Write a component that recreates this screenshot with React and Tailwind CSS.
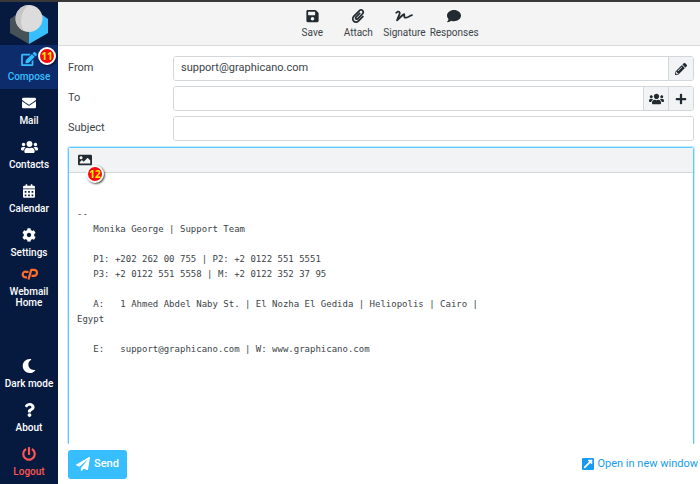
import {
  FaCalendarAlt,
  FaCog,
  FaComment,
  FaEdit,
  FaEnvelope,
  FaExternalLinkSquareAlt,
  FaImage,
  FaMoon,
  FaPaperclip,
  FaPaperPlane,
  FaPencilAlt,
  FaPlus,
  FaPowerOff,
  FaQuestion,
  FaSave,
  FaSignature,
  FaUsers,
} from 'react-icons/fa'

const mainLinks = [
  { label: 'Compose', icon: FaEdit, iconClass: 'w-4', className: 'bg-[#0c2c6c] text-[#37beff]', step: 11 },
  { label: 'Mail', icon: FaEnvelope, iconClass: 'w-[14px]', className: 'text-white' },
  { label: 'Contacts', icon: FaUsers, iconClass: 'w-[17px]', className: 'text-white' },
  { label: 'Calendar', icon: FaCalendarAlt, iconClass: 'w-3', className: 'text-white' },
  { label: 'Settings', icon: FaCog, iconClass: 'w-[14px]', className: 'text-white' },
  { label: 'Webmail Home', icon: CpanelMark, iconClass: 'w-[17px]', className: 'text-white' },
]

const bottomLinks = [
  { label: 'Dark mode', icon: FaMoon, iconClass: 'w-[14px]', className: 'text-white' },
  { label: 'About', icon: FaQuestion, iconClass: 'w-[11px]', className: 'text-white' },
  { label: 'Logout', icon: FaPowerOff, iconClass: 'w-[14px]', className: 'text-[#ff5552]' },
]

const tools = [
  { label: 'Save', icon: FaSave, iconClass: 'w-[13px]' },
  { label: 'Attach', icon: FaPaperclip, iconClass: 'w-[14px]' },
  { label: 'Signature', icon: FaSignature, iconClass: 'w-[18px]' },
  { label: 'Responses', icon: FaComment, iconClass: 'w-[14px]' },
]

const signature = `

--
   Monika George | Support Team

   P1: +202 262 00 755 | P2: +2 0122 551 5551
   P3: +2 0122 551 5558 | M: +2 0122 352 37 95

   A:   1 Ahmed Abdel Naby St. | El Nozha El Gedida | Heliopolis | Cairo |
Egypt

   E:   support@graphicano.com | W: www.graphicano.com`

function Logo() {
  return (
    <svg viewBox="0 0 40 40" className="h-10 w-10" aria-hidden="true">
      <path d="M1 15 L8 10 L20 20 V40 L1 29 Z" fill="#465158" />
      <path d="M39 15 L32 10 L20 20 V40 L39 29 Z" fill="#37beff" />
      <circle cx="20" cy="14.500" r="13.500" fill="#dcdcdc" />
      <path d="M20 1 A13.500 13.500 0 0 0 15 27 C10 20 11 7 20 1 Z" fill="#c6c6c6" />
    </svg>
  )
}

function CpanelMark({ className }) {
  return (
    <svg viewBox="0 0 34 24" className={className} fill="none" stroke="#ff6c2c" strokeWidth="4.500" aria-hidden="true">
      <path d="M15 7.500 H9.500 A5.500 5.500 0 0 0 8.500 18.500 H12" />
      <path d="M15 23 L20.500 3.500 H26 A5.800 5.800 0 0 1 26 15.500 H21" strokeLinejoin="round" />
    </svg>
  )
}

function Step({ number, className }) {
  return (
    <span
      className={`absolute flex h-[18px] w-[18px] items-center justify-center rounded-full border-2 border-white bg-[#fb0808] font-['Open_Sans',sans-serif] text-[10px] leading-none font-bold text-[#ffee00] shadow-[1px_1px_2px_rgba(0,0,0,0.7)] ${className}`}
    >
      {number}
    </span>
  )
}

function SideLink({ label, icon: Icon, iconClass, className, step }) {
  return (
    <a
      href="#"
      className={`relative flex min-h-[44px] flex-col items-center justify-center gap-[5px] px-1 py-0.5 text-center text-[10px] leading-[11px] font-medium ${className}`}
    >
      <Icon className={`h-[14px] ${iconClass}`} />
      <span>{label}</span>
      {step && <Step number={step} className="top-0.5 right-0.5" />}
    </a>
  )
}

function Field({ id, label, value, children }) {
  return (
    <div className="flex items-center">
      <label htmlFor={id} className="w-[105px] shrink-0 text-[11px]">
        {label}
      </label>
      <div className="flex h-[25px] min-w-0 flex-1 overflow-hidden rounded-[3px] border border-[#d3d7da]">
        <input id={id} type="text" defaultValue={value} className="min-w-0 flex-1 bg-white px-[7px] text-[11px] outline-none" />
        {children}
      </div>
    </div>
  )
}

function FieldButton({ label, icon: Icon, iconClass }) {
  return (
    <button
      type="button"
      aria-label={label}
      className="flex w-[25px] shrink-0 items-center justify-center border-l border-[#d3d7da] bg-[#f1f3f4] text-[#222b31]"
    >
      <Icon className={iconClass} />
    </button>
  )
}

export default function App() {
  return (
    <div className="flex min-h-screen flex-col bg-white font-['Roboto',sans-serif] text-[#3b4449]">
      <div className="h-0.5 bg-[#3b3839]" />
      <div className="flex flex-1">

        {/* Sidebar */}
        <nav className="flex w-[58px] shrink-0 flex-col bg-[#061a3f]">
          <div className="flex h-[43px] items-center justify-center">
            <Logo />
          </div>
          {mainLinks.map((link) => (
            <SideLink key={link.label} {...link} />
          ))}
          <div className="mt-auto">
            {bottomLinks.map((link) => (
              <SideLink key={link.label} {...link} />
            ))}
          </div>
        </nav>

        <main className="flex min-w-0 flex-1 flex-col">

          {/* Toolbar */}
          <header className="flex h-11 shrink-0 justify-center border-b border-[#d9dbdc] bg-[#f4f4f4] pt-px pl-3">
            {tools.map(({ label, icon: Icon, iconClass }) => (
              <button
                key={label}
                type="button"
                className="flex min-w-[46px] flex-col items-center justify-center gap-1 px-0.5 text-[10px] leading-3"
              >
                <Icon className={`h-[14px] text-[#222b31] ${iconClass}`} />
                {label}
              </button>
            ))}
          </header>

          <form className="flex flex-1 flex-col pt-[10px] pr-1.5 pl-[10px]">
            <div className="flex flex-col gap-[5px]">
              <Field id="from" label="From" value="support@graphicano.com">
                <FieldButton label="Edit identities" icon={FaPencilAlt} iconClass="h-3 w-3" />
              </Field>
              <Field id="to" label="To">
                <FieldButton label="Add contact" icon={FaUsers} iconClass="h-3 w-[15px]" />
                <FieldButton label="Add recipient field" icon={FaPlus} iconClass="h-3 w-3" />
              </Field>
              <Field id="subject" label="Subject" />
            </div>

            {/* Editor */}
            <div className="mt-[6px] flex flex-1 flex-col rounded-t-[3px] border border-b-0 border-[#5cc8ff] shadow-[-1px_-1px_0_#c4ecfe,1px_-1px_0_#c4ecfe]">
              <div className="relative flex h-[25px] items-center border-b border-[#d3d7da] bg-[#f1f3f4] px-[9px]">
                <button type="button" aria-label="Insert image" className="text-[#222b31]">
                  <FaImage className="h-[14px] w-[14px]" />
                </button>
                <Step number={12} className="top-[17px] left-[17px]" />
              </div>
              <textarea
                aria-label="Message"
                defaultValue={signature}
                className="w-full flex-1 resize-none bg-transparent px-2 pt-1 font-['DejaVu_Sans_Mono',monospace] text-[9px] leading-[15px] outline-none"
              />
            </div>
          </form>

          <footer className="flex h-10 shrink-0 items-center justify-between pr-0.5 pl-[10px]">
            <button
              type="button"
              className="flex h-[29px] items-center gap-1 rounded-[3px] bg-[#37beff] px-2 text-[11px] font-medium text-white"
            >
              <FaPaperPlane className="h-[14px] w-[14px]" />
              Send
            </button>
            <a href="#" className="flex items-center gap-[3px] text-[11px] text-[#189bee]">
              <FaExternalLinkSquareAlt className="h-[14px] w-3" />
              Open in new window
            </a>
          </footer>
        </main>
      </div>
    </div>
  )
}
